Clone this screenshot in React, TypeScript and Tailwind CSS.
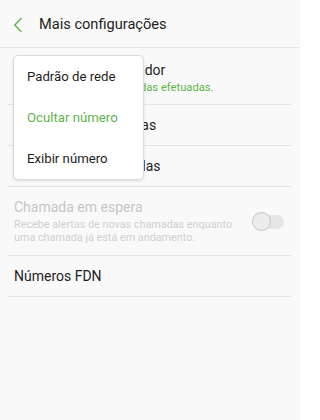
import React from 'react';

const green = 'text-[#5fb54c]';

const Row = ({ title, sub, disabled, toggle, className }: { title: string; sub?: string; disabled?: boolean; toggle?: boolean; className: string }) => (
  <div className={`flex items-center border-b border-[#e4e4e4] ${className}`}>
    <div className="flex-1 pl-[6px]">
      <div className={`max-w-[230px] text-[14px] leading-[18px] ${disabled ? 'text-[#c6c6c6]' : 'text-[#1e1e1e]'}`}>{title}</div>
      {sub && (
        <div className={`max-w-[230px] leading-[13px] mt-[2px] ${disabled ? 'text-[10.8px] text-[#d0d0d0]' : `text-[11.2px] ${green}`}`}>{sub}</div>
      )}
    </div>
    {toggle && (
      <div className="relative w-[31px] h-[14px] mr-[8px] mt-[1px] rounded-full bg-[#e6e6e6]">
        <div className="absolute -left-[1px] -top-[3px] w-[19px] h-[19px] rounded-full bg-[#ececec] border-[1.5px] border-[#c3c3c3]" />
      </div>
    )}
  </div>
);

export default function App() {
  return (
    <div className="relative w-[300px] h-[420px] bg-[#f9f9f9] overflow-hidden" style={{ fontFamily: 'Roboto, "Noto Sans", sans-serif' }}>
      <header className="h-[48px] pt-[3px] flex items-center border-b border-[#e4e4e4]">
        <svg width="10" height="16" viewBox="0 0 10 16" className="ml-[13px]">
          <path d="M8.5 1 L1.8 8 L8.5 15" fill="none" stroke="#5fb54c" strokeWidth="1.4" />
        </svg>
        <h1 className="ml-[16px] text-[14.6px] text-[#1e1e1e]">Mais configurações</h1>
      </header>

      <div className="px-[8px]">
        <Row className="h-[57px] pt-[3px]" title="Mostrar ID do chamador" sub="Exibir número nas chamadas efetuadas." />
        <Row className="h-[41px]" title="Bloqueio de chamadas" />
        <Row className="h-[41px]" title="Restrição de chamadas" />
        <Row
          className="h-[69px]"
          title="Chamada em espera"
          sub="Recebe alertas de novas chamadas enquanto uma chamada já está em andamento."
          disabled
          toggle
        />
        <Row className="h-[41px]" title="Números FDN" />
      </div>

      <div className="absolute left-[13px] top-[55px] w-[131px] bg-white rounded-[5px] border border-[#dcdcdc] shadow-[0_1px_3px_rgba(0,0,0,0.12)] text-[13.2px]">
        <div className="h-[41px] flex items-center pl-[13px] text-[#1e1e1e]">Padrão de rede</div>
        <div className={`h-[41px] flex items-center pl-[13px] ${green}`}>Ocultar número</div>
        <div className="h-[41px] flex items-center pl-[13px] text-[#1e1e1e]">Exibir número</div>
      </div>
    </div>
  );
}
